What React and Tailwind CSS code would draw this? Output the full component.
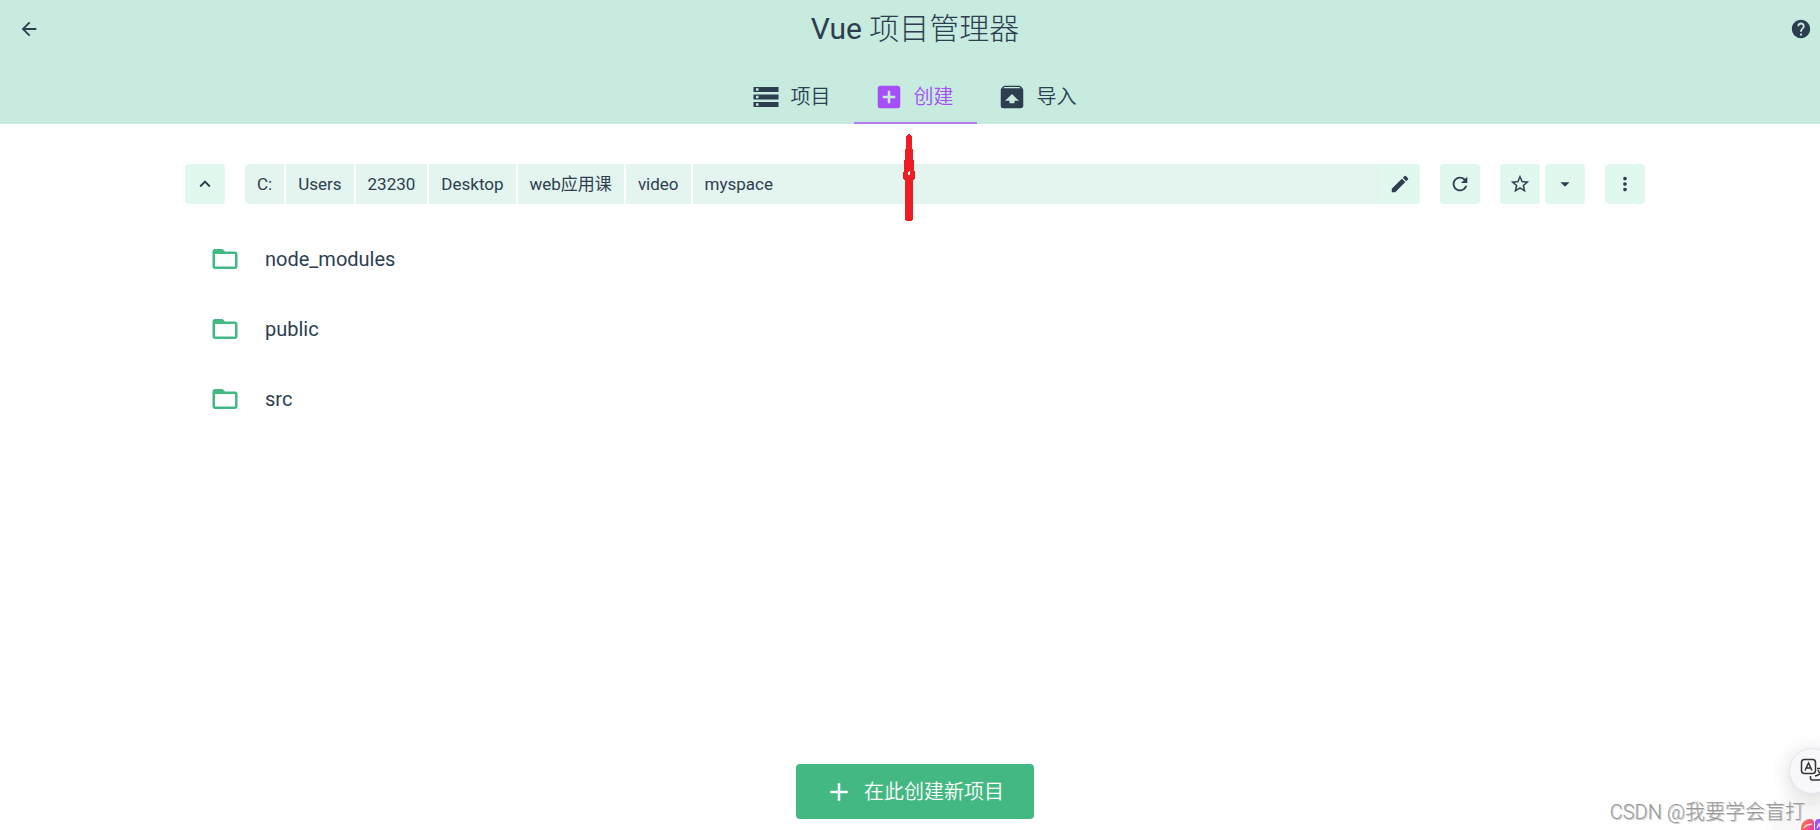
import React, { useState } from "react";
import {
  MdAddBox,
  MdArrowBack,
  MdArrowDropDown,
  MdEdit,
  MdFolderOpen,
  MdHelp,
  MdKeyboardArrowUp,
  MdMoreVert,
  MdRefresh,
  MdStarBorder,
  MdStorage,
  MdUnarchive,
  MdAdd,
} from "react-icons/md";

const tabs = [
  { id: "projects", label: "项目", icon: MdStorage },
  { id: "create", label: "创建", icon: MdAddBox },
  { id: "import", label: "导入", icon: MdUnarchive },
];

const pathParts = ["C:", "Users", "23230", "Desktop", "web应用课", "video", "myspace"];

const folders = ["node_modules", "public", "src"];

function IconButton({ label, icon: Icon, className = "rounded" }) {
  return (
    <button
      type="button"
      aria-label={label}
      className={`flex size-10 shrink-0 items-center justify-center bg-[#e0f8ed] ${className}`}
    >
      <Icon className="size-[22px]" />
    </button>
  );
}

function Header({ active, onSelect }) {
  return (
    <header className="bg-[#c7ebdf]">
      <div className="flex h-[58px] items-center justify-between px-[18px]">
        <button type="button" aria-label="返回">
          <MdArrowBack className="size-[22px]" />
        </button>
        <h1 className="text-[30px] leading-10 font-light">
          <span className="font-normal">Vue</span> 项目管理器
        </h1>
        <button type="button" aria-label="帮助">
          <MdHelp className="size-[22px]" />
        </button>
      </div>
      <nav className="flex h-[66px] items-stretch justify-center">
        {tabs.map(({ id, label, icon: Icon }) => (
          <button
            key={id}
            type="button"
            onClick={() => onSelect(id)}
            className={`flex w-[123px] items-center gap-[10px] border-b-2 pt-[14px] pl-5 text-xl font-[350] ${
              id === active ? "border-[#b07cf0] text-[#a64ef8]" : "border-transparent"
            }`}
          >
            <Icon className="size-[30px]" />
            {label}
          </button>
        ))}
      </nav>
    </header>
  );
}

function PathBar() {
  return (
    <div className="flex items-center gap-5">
      <IconButton label="上级目录" icon={MdKeyboardArrowUp} />
      <div className="flex h-10 flex-1 gap-[2px] overflow-hidden rounded text-[17px] leading-6">
        {pathParts.map((part, i) => (
          <button
            key={part}
            type="button"
            className={`bg-[#e4f4ee] px-3 text-left ${i === pathParts.length - 1 ? "flex-1" : ""}`}
          >
            {part}
          </button>
        ))}
        <IconButton label="编辑路径" icon={MdEdit} className="-ml-[2px]" />
      </div>
      <IconButton label="刷新" icon={MdRefresh} />
      <div className="flex gap-[5px]">
        <IconButton label="收藏" icon={MdStarBorder} />
        <IconButton label="收藏夹" icon={MdArrowDropDown} />
      </div>
      <IconButton label="更多" icon={MdMoreVert} />
    </div>
  );
}

// hand-drawn marker pointing at the active tab
function Pointer() {
  return (
    <svg className="absolute top-[134px] left-[903px]" width="12" height="87" viewBox="0 0 12 87" fill="#ee1c24" aria-hidden="true">
      <path
        fillRule="evenodd"
        d="M5 0h2v1h1v1h1v13h1v11h1v11h1v8h-1v1h-1v40h-1v1H3v-1H2V46H1v-1H0v-7h1V26h1V15h1V2h1V1h1zM6 37v1H5v3h2v-4z"
      />
    </svg>
  );
}

function FloatingTools() {
  return (
    <>
      <div className="absolute right-[-15px] bottom-[-22px] h-[46px] w-14 rounded-xl bg-[#f8f8f9] shadow-[0_0_20px_rgba(0,0,0,0.08)]">
        <svg className="mt-[13px] ml-[22px]" width="30" height="22" viewBox="0 0 30 22" aria-hidden="true">
          <defs>
            <linearGradient id="lobe" x1="0" y1="0" x2="1" y2="1">
              <stop offset="0" stopColor="#ff8a2a" />
              <stop offset="0.6" stopColor="#f0419c" />
            </linearGradient>
          </defs>
          <path d="M0 22V9C0 3 5 0 9 0q4 0 4 4v18z" fill="url(#lobe)" />
          <path d="M3 9c2-4 5-3 8-4" fill="none" stroke="#ffd9c8" strokeWidth="1.5" />
          <path d="M14 22V4q0-4 4-4h12v22z" fill="#a64ef0" />
          <path d="M16 9l2-4 2 4" fill="none" stroke="#ecd6ff" strokeWidth="1.5" />
        </svg>
      </div>
      <button
        type="button"
        aria-label="翻译"
        className="absolute right-[-15px] bottom-9 size-[46px] rounded-full border border-[#e2e2ec] bg-[#f8f8fa] shadow-[0_4px_20px_rgba(0,0,0,0.16)]"
      >
        <svg className="ml-[10px]" width="26" height="26" viewBox="0 0 26 26" fill="none" stroke="#333" strokeWidth="1.5">
          <rect x="1.500" y="1.500" width="14" height="14" rx="3" />
          <path d="M5 12.500L8.500 5l3.500 7.500M6 10h5M17 10.500h8M21 8.500v2M23 11c-1 4-3 6-8 7M18 12c1 3 3 5 6 6M10.500 18v2q0 2 2 2H25" />
        </svg>
      </button>
      <p className="absolute right-[15px] bottom-1 text-[20px] leading-7 font-light text-[#999] [text-shadow:1px_1px_0_#ccc]">
        CSDN @我要学会盲打
      </p>
    </>
  );
}

export default function App() {
  const [active, setActive] = useState("create");

  return (
    <div className="relative h-screen overflow-hidden bg-white font-[Roboto,'Noto_Sans_CJK_SC',sans-serif] text-[#2c3e50]">
      <div className="flex h-full w-[calc(100%+10px)] flex-col">
        <Header active={active} onSelect={setActive} />
        <main className="mx-auto flex w-full max-w-[1500px] flex-1 flex-col px-5 pt-10">
          <PathBar />
          <ul className="mt-5 flex-1">
            {folders.map((name) => (
              <li key={name}>
                <a href="#" className="flex h-[70px] items-center gap-[25px] px-[25px] text-xl">
                  <MdFolderOpen className="size-[30px] text-[#42b983]" />
                  {name}
                </a>
              </li>
            ))}
          </ul>
        </main>
        <footer className="flex justify-center pb-[11px]">
          <button
            type="button"
            className="flex h-[55px] items-center gap-[10px] rounded bg-[#44b883] pr-[30px] pl-7 text-xl font-[350] text-white"
          >
            <MdAdd className="size-[30px]" />
            在此创建新项目
          </button>
        </footer>
      </div>
      <Pointer />
      <FloatingTools />
    </div>
  );
}
